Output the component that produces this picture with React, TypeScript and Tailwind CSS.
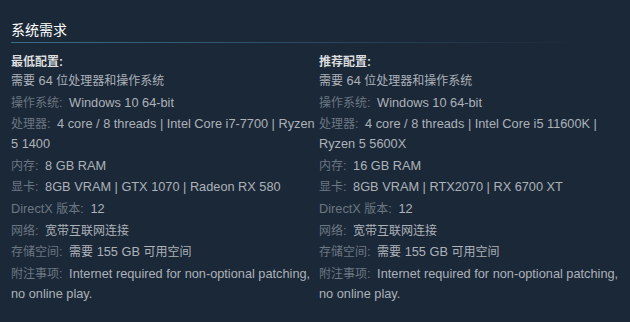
type Req = {
  label?: string;
  value: string;
};

type Column = {
  title: string;
  rows: Req[];
};

const columns: Column[] = [
  {
    title: "最低配置:",
    rows: [
      { value: "需要 64 位处理器和操作系统" },
      { label: "操作系统:", value: "Windows 10 64-bit" },
      { label: "处理器:", value: "4 core / 8 threads | Intel Core i7-7700 | Ryzen 5 1400" },
      { label: "内存:", value: "8 GB RAM" },
      { label: "显卡:", value: "8GB VRAM | GTX 1070 | Radeon RX 580" },
      { label: "DirectX 版本:", value: "12" },
      { label: "网络:", value: "宽带互联网连接" },
      { label: "存储空间:", value: "需要 155 GB 可用空间" },
      { label: "附注事项:", value: "Internet required for non-optional patching, no online play." },
    ],
  },
  {
    title: "推荐配置:",
    rows: [
      { value: "需要 64 位处理器和操作系统" },
      { label: "操作系统:", value: "Windows 10 64-bit" },
      { label: "处理器:", value: "4 core / 8 threads | Intel Core i5 11600K | Ryzen 5 5600X" },
      { label: "内存:", value: "16 GB RAM" },
      { label: "显卡:", value: "8GB VRAM | RTX2070 | RX 6700 XT" },
      { label: "DirectX 版本:", value: "12" },
      { label: "网络:", value: "宽带互联网连接" },
      { label: "存储空间:", value: "需要 155 GB 可用空间" },
      { label: "附注事项:", value: "Internet required for non-optional patching, no online play." },
    ],
  },
];

/**
 * Chinese runs are drawn a touch smaller than the latin text, like the bitmap font in the shot
 */
function Mixed({ text }: { text: string }) {
  const parts = text.split(/([\u3400-\u9fff]+)/);
  return (
    <>
      {parts.map((part, key) =>
        /[\u3400-\u9fff]/.test(part)
          ? <span key={key} className="text-[12px]">{part}</span>
          : <span key={key}>{part}</span>
      )}
    </>
  );
}

function ReqColumn({ title, rows }: Column) {
  return (
    <div>
      <div className="text-[12px] font-bold leading-[18px] text-[#dcdedf]">
        <Mixed text={title} />
      </div>
      <ul className="flex flex-col gap-y-[1.6px]">
        {rows.map((row, key) => (
          <li key={key} className="leading-[20px] text-[#acb2b8]">
            {row.label && (
              <>
                <span className="mr-[3px] text-[#6b7782]">
                  <Mixed text={row.label} />
                </span>{" "}
              </>
            )}
            <Mixed text={row.value} />
          </li>
        ))}
      </ul>
    </div>
  );
}

export default function App() {
  return (
    <div
      className="h-[322px] w-[630px] overflow-hidden bg-[#1b2838] pl-[11px] pt-[20px] text-[12.75px]"
      style={{ fontFamily: '"Liberation Sans", "Noto Sans CJK SC", sans-serif' }}
    >
      <h2 className="text-[14px] leading-[20px] text-white">系统需求</h2>
      <div className="mt-[2px] h-px w-[570px] bg-gradient-to-r from-[#3b6e8c] to-[#3b6e8c00]" />
      <div className="mt-[10px] grid grid-cols-[308px_308px]">
        {columns.map((col, key) => <ReqColumn key={key} {...col} />)}
      </div>
    </div>
  );
}
